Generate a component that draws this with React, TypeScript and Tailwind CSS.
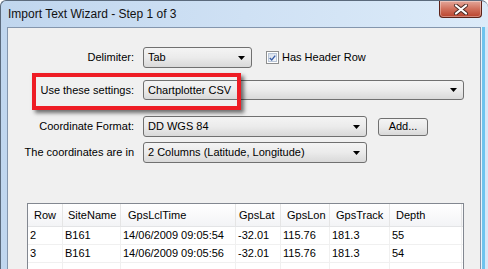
import React from "react";

function Combo({ w, text, h = "h-[21px]" }: { w: string; text: string; h?: string }) {
  return (
    <div
      className={`${w} ${h} relative flex items-center border border-[#707070] rounded-[3px] bg-gradient-to-b from-[#f4f4f4] via-[#ebebeb] to-[#d9d9d9] pl-[4px] shrink-0`}
    >
      <span className="whitespace-nowrap">{text}</span>
      <svg className="absolute right-[6px] top-1/2 -translate-y-1/2" width="7" height="4" viewBox="0 0 7 4">
        <path d="M0 0 H7 L3.5 4 Z" fill="#000" />
      </svg>
    </div>
  );
}

const cols = ["Row", "SiteName", "GpsLclTime", "GpsLat", "GpsLon", "GpsTrack", "Depth"];
const widths = ["w-[35px]", "w-[58px]", "w-[115px]", "w-[45px]", "w-[49px]", "w-[60px]", "w-[72px]"];
const headPads = ["pl-[6px]", "pl-[5px]", "pl-[7px]", "pl-[3px]", "pl-[6px]", "pl-[6px]", "pl-[6px]"];
const rows = [
  ["2", "B161", "14/06/2009 09:05:54", "-32.01", "115.76", "181.3", "55"],
  ["3", "B161", "14/06/2009 09:05:56", "-32.01", "115.76", "181.3", "54"],
  ["", "", "", "", "", "", ""],
];

export default function App() {
  return (
    <div className="w-[488px] h-[269px] overflow-hidden flex flex-col font-['Liberation_Sans',Arial,sans-serif] text-[11px] text-black bg-gradient-to-r from-[#c0d6ee] via-[#cfe1f4] to-[#dcebf9] border-t border-l border-[#5b6a7c] rounded-tl-[6px] rounded-tr-[7px]">
      {/* title bar */}
      <div className="h-[26px] flex items-start shrink-0">
        <div className="pl-[7px] pt-[5px] text-[12px] text-[#111] leading-[16px] whitespace-nowrap">
          Import Text Wizard - Step 1 of 3
        </div>
        <div className="ml-auto mr-[6px] w-[43px] h-[17px] relative flex items-center justify-center rounded-b-[4px] border border-t-0 border-[#5c2218] bg-gradient-to-b from-[#e3a79a] via-[#d0705c] to-[#b9422c] shadow-[inset_0_0_0_1px_rgba(255,255,255,0.35)]">
          <svg width="16" height="11" viewBox="0 0 16 11">
            <path
              d="M3 1.5 L13 9.5 M13 1.5 L3 9.5"
              stroke="#4a2a24"
              strokeWidth="4"
              strokeLinecap="round"
            />
            <path
              d="M3 1.5 L13 9.5 M13 1.5 L3 9.5"
              stroke="#ffffff"
              strokeWidth="2.2"
              strokeLinecap="round"
            />
          </svg>
        </div>
      </div>
      {/* body */}
      <div className="flex flex-1 min-h-0">
        <div className="w-[6px] shrink-0" />
        <div className="w-[474px] shrink-0 border border-b-0 border-[#8496ad] bg-[#f0f0f0] relative">
          <div className="pt-[19px] flex flex-col">
            {/* row 1 */}
            <div className="flex items-center h-[21px]">
              <div className="w-[126px] text-right whitespace-nowrap">Delimiter:</div>
              <div className="ml-[9px]">
                <Combo w="w-[109px]" text="Tab" />
              </div>
              <div className="ml-[14px] w-[13px] h-[13px] border border-[#8e8f8f] bg-white p-[1px]">
                <div className="w-full h-full border border-[#b9c6d8] bg-gradient-to-br from-[#d6deea] to-[#f6f8fb] flex items-center justify-center">
                  <svg width="9" height="8" viewBox="0 0 9 8">
                    <path d="M1 4 L3.5 6.5 L8 1" stroke="#3a5fa8" strokeWidth="1.8" fill="none" />
                  </svg>
                </div>
              </div>
              <div className="ml-[3px] whitespace-nowrap">Has Header Row</div>
            </div>
            {/* row 2 */}
            <div className="flex items-center h-[20px] mt-[12px]">
              <div className="w-[126px] text-right whitespace-nowrap">Use these settings:</div>
              <div className="ml-[9px]">
                <Combo w="w-[321px]" h="h-[20px]" text="Chartplotter CSV" />
              </div>
            </div>
            {/* row 3 */}
            <div className="flex items-center h-[21px] mt-[16px]">
              <div className="w-[126px] text-right whitespace-nowrap">Coordinate Format:</div>
              <div className="ml-[9px]">
                <Combo w="w-[224px]" text="DD WGS 84" />
              </div>
              <div className="ml-[11px] w-[50px] h-[18px] flex items-center justify-center border border-[#707070] rounded-[3px] bg-gradient-to-b from-[#f4f4f4] via-[#ebebeb] to-[#d9d9d9]">
                Add...
              </div>
            </div>
            {/* row 4 */}
            <div className="flex items-center h-[21px] mt-[5px]">
              <div className="w-[126px] text-right whitespace-nowrap">The coordinates are in</div>
              <div className="ml-[9px]">
                <Combo w="w-[224px]" text="2 Columns (Latitude, Longitude)" />
              </div>
            </div>
            {/* table */}
            <div className="ml-[19px] mt-[40px] w-[437px] bg-white border-l border-t border-r border-[#828790]">
              <div className="flex h-[23px] bg-gradient-to-b from-white to-[#f3f4f6] border-b border-[#e3e4e6]">
                {cols.map((c, i) => (
                  <div
                    key={c}
                    className={`${widths[i]} ${headPads[i]} shrink-0 flex items-center border-r border-[#e5e5e5] whitespace-nowrap`}
                  >
                    {c}
                  </div>
                ))}
              </div>
              {rows.map((r, ri) => (
                <div key={ri} className="flex h-[18px] border-b border-[#f0f0f0]">
                  {r.map((v, i) => (
                    <div
                      key={i}
                      className={`${widths[i]} shrink-0 flex items-center pl-[2px] border-r border-[#f0f0f0] whitespace-nowrap`}
                    >
                      {v}
                    </div>
                  ))}
                </div>
              ))}
            </div>
          </div>
          {/* annotation highlight */}
          <div className="absolute left-[24px] top-[45px] w-[209px] h-[37px] border-[4px] border-[#ee1c24] shadow-[3px_3px_4px_rgba(0,0,0,0.55)]" />
        </div>
        <div className="flex-1 flex">
          <div className="w-[1px] bg-[#eaf3fb]" />
          <div className="w-[3px] bg-[#6ec3ee]" />
          <div className="flex-1 bg-[#d6e7f7]" />
        </div>
      </div>
    </div>
  );
}
